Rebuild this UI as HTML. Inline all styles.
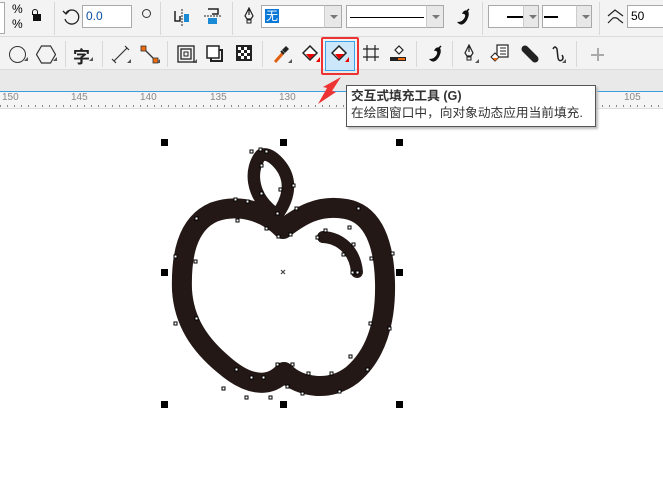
<!DOCTYPE html>
<html><head><meta charset="utf-8"><style>
*{margin:0;padding:0;box-sizing:border-box}
body{width:663px;height:484px;overflow:hidden;background:#fff;font-family:"Liberation Sans","Noto Sans CJK SC",sans-serif;position:relative}
.a{position:absolute}
.inp{position:absolute;background:#fff;border:1px solid #a9a9a9;font-size:12px;line-height:20px;padding-left:3px;color:#000}
.dd{position:absolute;background:#e8e8e8;border:1px solid #a9a9a9;border-left:1px solid #ccc}
.dd:after{content:"";position:absolute;left:5px;top:9px;border:4px solid transparent;border-top:4px solid #777}
.sep{position:absolute;width:1px;background:#d8d8d8}
</style></head><body>
<div class="a" style="left:0;top:0;width:663px;height:37px;background:#f3f3f3;border-bottom:1px solid #dcdcdc"></div>
<div class="a" style="left:0;top:37px;width:663px;height:33px;background:#f3f3f3;border-bottom:1px solid #dcdcdc"></div>
<div class="a" style="left:0;top:70px;width:663px;height:21px;background:#e9e9e9"></div>
<div class="a" style="left:0;top:91px;width:663px;height:18px;background:#f5f5f5;border-top:1px solid #3a9ee0;border-bottom:1px solid #ddd"></div>

<!-- toolbar 1 -->
<div class="inp" style="left:-4px;top:2px;width:9px;height:32px"></div>
<div class="a" style="left:12px;top:2px;font-size:12px;line-height:15px">%<br>%</div>
<div class="a" style="left:33px;top:14px;width:8px;height:7px;background:#111"></div>
<div class="a" style="left:32px;top:9px;width:6px;height:6px;border:1.5px solid #111;border-bottom:none;border-radius:3px 3px 0 0"></div>
<div class="sep" style="left:54px;top:2px;height:33px"></div>
<svg class="a" style="left:62px;top:8px" width="18" height="18"><path d="M4,5 A7,7 0 1 1 3,11" fill="none" stroke="#222" stroke-width="1.3"/><path d="M1,3 L4,6 L7,3" fill="none" stroke="#222" stroke-width="1.3"/></svg>
<div class="inp" style="left:82px;top:5px;width:50px;height:23px;color:#0a4ea0">0.0</div>
<div class="a" style="left:142px;top:9px;width:9px;height:9px;border:1.3px solid #333;border-radius:50%"></div>
<div class="sep" style="left:160px;top:2px;height:33px"></div>
<svg class="a" style="left:173px;top:8px" width="18" height="18"><path d="M2,3v10h5V8" fill="none" stroke="#222" stroke-width="1.5"/><rect x="11" y="6" width="5" height="8" fill="#1a8ad4"/><path d="M9,1v17" stroke="#222" stroke-dasharray="2 1"/></svg>
<svg class="a" style="left:204px;top:6px" width="18" height="20"><path d="M4,3h10v5H8" fill="none" stroke="#222" stroke-width="1.5"/><rect x="4" y="12" width="9" height="6" fill="#1a8ad4"/><path d="M0,10h18" stroke="#222" stroke-dasharray="2 1"/></svg>
<div class="sep" style="left:232px;top:2px;height:33px"></div>
<svg class="a" style="left:244px;top:7px" width="10" height="18"><path d="M5,1 L1,9 L3,12 H7 L9,9 Z M5,1 V8" fill="none" stroke="#222" stroke-width="1.2"/><rect x="3" y="13" width="4" height="3" fill="none" stroke="#222"/></svg>
<div class="inp" style="left:261px;top:5px;width:65px;height:23px"><span style="background:#0a78d7;color:#fff;padding:0 1px">无</span></div>
<div class="dd" style="left:324px;top:5px;width:18px;height:23px"></div>
<div class="inp" style="left:346px;top:5px;width:82px;height:23px"><div style="position:absolute;left:3px;right:3px;top:11px;height:1px;background:#000"></div></div>
<div class="dd" style="left:426px;top:5px;width:18px;height:23px"></div>
<svg class="a" style="left:454px;top:8px" width="18" height="20"><path d="M3,14 Q8,20 13,12 Q16,6 14,3 Q10,1 8,6 Q12,5 11,9 Q9,14 3,14Z" fill="#111"/><path d="M10,6 L15,1" stroke="#111" stroke-width="1.5"/></svg>
<div class="sep" style="left:482px;top:2px;height:33px"></div>
<div class="inp" style="left:488px;top:5px;width:40px;height:23px"><div style="position:absolute;left:18px;width:16px;top:10px;height:2px;background:#000"></div></div>
<div class="dd" style="left:523px;top:5px;width:16px;height:23px"></div>
<div class="inp" style="left:542px;top:5px;width:36px;height:23px"><div style="position:absolute;left:1px;width:14px;top:10px;height:2px;background:#000"></div></div>
<div class="dd" style="left:576px;top:5px;width:16px;height:23px"></div>
<div class="sep" style="left:599px;top:2px;height:33px"></div>
<svg class="a" style="left:607px;top:8px" width="18" height="18"><path d="M1,8 L8,2 L16,8 M1,15 L6,10 Q10,9 12,12 L16,15" fill="none" stroke="#222" stroke-width="1.2"/></svg>
<div class="inp" style="left:627px;top:5px;width:40px;height:23px">50</div>

<!-- toolbar 2 -->
<div class="a" style="left:9px;top:46px;width:17px;height:17px;border:1.3px solid #333;border-radius:50%"></div>
<svg class="a" style="left:36px;top:45px" width="20" height="19"><path d="M5,1h9l5,8.5l-5,8.5h-9l-5,-8.5z" fill="none" stroke="#333" stroke-width="1.2" transform="translate(0.5,0)"/></svg>
<div class="sep" style="left:65px;top:41px;height:26px"></div>
<div class="a" style="left:73px;top:43px;font-size:17px;font-weight:bold;color:#222">字</div>
<div class="sep" style="left:102px;top:41px;height:26px"></div>
<svg class="a" style="left:111px;top:45px" width="20" height="20"><path d="M3,16 L16,3 M1,14l4,4 M14,1l4,4" stroke="#333" stroke-width="1.2"/></svg>
<svg class="a" style="left:140px;top:45px" width="20" height="20"><path d="M4,4 L15,15" stroke="#333" stroke-width="1.3"/><rect x="1" y="1" width="5" height="5" fill="#f06a0a" stroke="#333" stroke-width=".8"/><rect x="13" y="13" width="5" height="5" fill="#f06a0a" stroke="#333" stroke-width=".8"/></svg>
<div class="sep" style="left:167px;top:41px;height:26px"></div>
<svg class="a" style="left:177px;top:45px" width="18" height="18"><rect x="1" y="1" width="16" height="16" fill="none" stroke="#222" stroke-width="1.3"/><rect x="4" y="4" width="10" height="10" fill="none" stroke="#222" stroke-width="1.3"/><rect x="7" y="7" width="4" height="4" fill="none" stroke="#222"/></svg>
<svg class="a" style="left:206px;top:45px" width="18" height="18"><rect x="1" y="1" width="12" height="12" fill="#fff" stroke="#222" stroke-width="1.5"/><path d="M13,5h3v11h-11v-3" fill="none" stroke="#222" stroke-width="2"/></svg>
<svg class="a" style="left:236px;top:45px" width="16" height="16"><rect width="16" height="16" fill="#222"/><g fill="#fff"><rect x="2" y="2" width="3" height="3"/><rect x="8" y="2" width="3" height="3"/><rect x="5" y="5" width="3" height="3"/><rect x="11" y="5" width="3" height="3"/><rect x="2" y="8" width="3" height="3"/><rect x="8" y="8" width="3" height="3"/><rect x="5" y="11" width="3" height="3"/><rect x="11" y="11" width="3" height="3"/></g></svg>
<div class="sep" style="left:262px;top:41px;height:26px"></div>
<svg class="a" style="left:272px;top:45px" width="18" height="20"><path d="M3,17 L11,8" stroke="#e06010" stroke-width="3"/><path d="M10,5 L14,1 L17,4 L13,8 Z" fill="#222"/><path d="M9,6 L12,9" stroke="#222" stroke-width="2"/></svg>
<svg class="a" style="left:302px;top:45px" width="18" height="18"><path d="M1,8 L8,1 L15,8 L8,15Z" fill="#fff" stroke="#222" stroke-width="1.5"/><path d="M4,9h9l-5,5z" fill="#e00"/><path d="M14,17h4v-5z" fill="#e00"/></svg>
<div class="a" style="left:321px;top:37px;width:38px;height:38px;border:2px solid #ee3333;border-radius:2px"></div>
<div class="a" style="left:325px;top:41px;width:30px;height:30px;background:#cce6fa;border:1px solid #3aa0e8"></div>
<svg class="a" style="left:331px;top:45px" width="18" height="18"><path d="M1,8 L8,1 L15,8 L8,15Z" fill="#fff" stroke="#222" stroke-width="1.5"/><path d="M4,9h9l-5,5z" fill="#e00"/><path d="M14,17h4v-5z" fill="#e00"/></svg>
<svg class="a" style="left:363px;top:45px" width="16" height="16"><path d="M4,0v16M12,0v16M0,4h16M0,12h16" stroke="#222" stroke-width="1.2"/></svg>
<svg class="a" style="left:389px;top:44px" width="18" height="18"><path d="M6,6 L10,2 L14,6 L10,10Z" fill="#fff" stroke="#222" stroke-width="1.2"/><rect x="1" y="13" width="16" height="4" fill="#222"/><rect x="9" y="14" width="7" height="2" fill="#f06a0a"/></svg>
<div class="sep" style="left:416px;top:41px;height:26px"></div>
<svg class="a" style="left:426px;top:45px" width="18" height="20"><path d="M3,14 Q8,20 13,12 Q16,6 14,3 Q10,1 8,6 Q12,5 11,9 Q9,14 3,14Z" fill="#111"/><path d="M10,6 L15,1" stroke="#111" stroke-width="1.5"/></svg>
<div class="sep" style="left:452px;top:41px;height:26px"></div>
<svg class="a" style="left:464px;top:44px" width="10" height="18"><path d="M5,1 L1,9 L3,12 H7 L9,9 Z M5,1 V8" fill="none" stroke="#222" stroke-width="1.2"/><rect x="3" y="13" width="4" height="3" fill="none" stroke="#222"/></svg>
<svg class="a" style="left:490px;top:44px" width="20" height="20"><rect x="7" y="1" width="11" height="12" fill="#fff" stroke="#222" stroke-width="1.2"/><path d="M10,4h6M10,7h6M10,10h6" stroke="#222"/><path d="M1,13 L5,9 L9,13 L5,17Z" fill="#fff" stroke="#222"/><path d="M3,14h5l-3,3z" fill="#f06a0a"/></svg>
<svg class="a" style="left:521px;top:45px" width="18" height="18"><path d="M4,4 L14,14" stroke="#222" stroke-width="7" stroke-linecap="round"/></svg>
<svg class="a" style="left:549px;top:44px" width="18" height="20"><path d="M4,5 Q6,1 8,5 L9,14 Q10,18 13,16 Q15,14 13,11" fill="none" stroke="#222" stroke-width="1.5"/></svg>
<div class="sep" style="left:576px;top:41px;height:26px"></div>
<div class="a" style="left:591px;top:54px;width:13px;height:1.5px;background:#aaa"></div>
<div class="a" style="left:597px;top:48px;width:1.5px;height:13px;background:#aaa"></div>
<svg class="a" style="left:0;top:37px" width="663" height="33"><g fill="#555"><path d="M24,24h4v-4z"/><path d="M53,24h4v-4z"/><path d="M89,24h4v-4z"/><path d="M127,26h4v-4z"/><path d="M156,26h4v-4z"/><path d="M193,26h4v-4z"/><path d="M288,26h4v-4z"/><path d="M475,26h4v-4z"/><path d="M562,26h4v-4z"/></g></svg>

<!-- ruler -->
<div class="a" style="top:92px;left:0;width:663px;height:16px;font-size:10px;color:#888">
<span class="a" style="left:2px;top:0">150</span><span class="a" style="left:71px;top:0">145</span><span class="a" style="left:140px;top:0">140</span><span class="a" style="left:210px;top:0">135</span><span class="a" style="left:279px;top:0">130</span><span class="a" style="left:624px;top:0">105</span>
<div class="a" style="left:0;top:13px;width:663px;height:2px;background:repeating-linear-gradient(90deg,#888 0 1px,transparent 1px 7px)"></div>
</div>

<svg class="a" style="left:310px;top:74px" width="40" height="36"><path d="M31,3 L22,17 L26,18 L8,30 L17,14 L13,13 Z" fill="#ee3333"/></svg>

<div class="a" style="left:348px;top:87px;width:250px;height:42px;background:#bbb;filter:blur(1px)"></div>
<div class="a" style="left:346px;top:85px;width:250px;height:42px;background:#fff;border:1px solid #555;padding:2px 0 0 4px;font-size:12.7px;line-height:17px;color:#333">
<div style="font-weight:bold">交互式填充工具 (G)</div><div>在绘图窗口中，向对象动态应用当前填充.</div></div>

<svg class="a" style="left:0;top:0" width="663" height="484">
<g fill="none" stroke="#231815" stroke-linejoin="round" stroke-linecap="round">
<path d="M283,229 C266,212 240,203 214,212 C186,224 181,258 182,290 C184,322 200,345 224,365 C246,384 268,390 284,372 C300,388 330,392 352,375 C376,355 386,322 385,282 C384,245 374,214 346,209 C318,204 300,216 283,229 Z" stroke-width="20"/>
<path d="M261,155 C250,168 249,196 277,215 C288,200 293,182 281,166 C274,157 267,153 261,155 Z" stroke-width="12.5"/>
<path d="M323,237 C340,238 355,250 357,272" stroke-width="12"/>
</g>
<g fill="#fff" stroke="#000" stroke-width="1">
<rect x="250" y="150" width="3" height="3"/><rect x="259" y="148" width="3" height="3"/><rect x="265" y="150" width="3" height="3"/><rect x="260" y="164" width="3" height="3"/><rect x="292" y="184" width="3" height="3"/><rect x="279" y="188" width="3" height="3"/><rect x="260" y="192" width="3" height="3"/><rect x="246" y="200" width="3" height="3"/><rect x="234" y="198" width="3" height="3"/><rect x="195" y="217" width="3" height="3"/><rect x="174" y="255" width="3" height="3"/><rect x="194" y="260" width="3" height="3"/><rect x="236" y="219" width="3" height="3"/><rect x="276" y="212" width="3" height="3"/><rect x="265" y="227" width="3" height="3"/><rect x="277" y="235" width="3" height="3"/><rect x="289" y="233" width="3" height="3"/><rect x="295" y="207" width="3" height="3"/><rect x="357" y="207" width="3" height="3"/><rect x="348" y="226" width="3" height="3"/><rect x="391" y="252" width="3" height="3"/><rect x="370" y="257" width="3" height="3"/><rect x="324" y="229" width="3" height="3"/><rect x="316" y="236" width="3" height="3"/><rect x="352" y="243" width="3" height="3"/><rect x="342" y="253" width="3" height="3"/><rect x="351" y="271" width="3" height="3"/><rect x="356" y="271" width="3" height="3"/><rect x="174" y="322" width="3" height="3"/><rect x="195" y="317" width="3" height="3"/><rect x="369" y="322" width="3" height="3"/><rect x="388" y="327" width="3" height="3"/><rect x="349" y="355" width="3" height="3"/><rect x="366" y="368" width="3" height="3"/><rect x="235" y="368" width="3" height="3"/><rect x="222" y="387" width="3" height="3"/><rect x="250" y="376" width="3" height="3"/><rect x="262" y="376" width="3" height="3"/><rect x="245" y="396" width="3" height="3"/><rect x="269" y="396" width="3" height="3"/><rect x="276" y="363" width="3" height="3"/><rect x="291" y="363" width="3" height="3"/><rect x="286" y="385" width="3" height="3"/><rect x="307" y="372" width="3" height="3"/><rect x="330" y="372" width="3" height="3"/><rect x="301" y="392" width="3" height="3"/><rect x="338" y="390" width="3" height="3"/>
</g>
<g fill="#000">
<rect x="161" y="139" width="7" height="7"/><rect x="280" y="139" width="7" height="7"/><rect x="396" y="139" width="7" height="7"/>
<rect x="161" y="269" width="7" height="7"/><rect x="396" y="269" width="7" height="7"/>
<rect x="161" y="401" width="7" height="7"/><rect x="280" y="401" width="7" height="7"/><rect x="396" y="401" width="7" height="7"/>
</g>
<path d="M281,270l4,4M285,270l-4,4" stroke="#444" stroke-width="1.2"/>
</svg>
</body></html>
